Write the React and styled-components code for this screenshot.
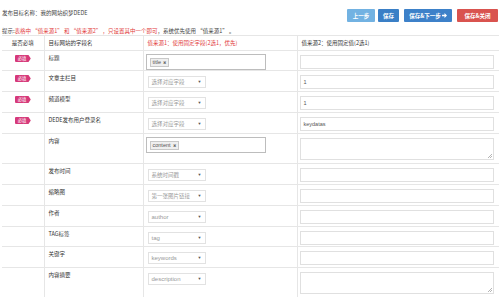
import React from "react";
import styled, { createGlobalStyle } from "styled-components";

const Global = createGlobalStyle`
  html, body { margin: 0; padding: 0; background: #fff; }
  body {
    font-family: "Noto Sans CJK SC", "Liberation Sans", sans-serif;
    font-size: 5.5px;
    color: #333;
    overflow: hidden;
  }
  * { box-sizing: border-box; }
`;

const Page = styled.div`
  width: 499px;
  height: 297px;
  padding: 0 1px 0 2px;
  overflow: hidden;
`;

const TopBar = styled.div`
  display: flex;
  justify-content: space-between;
  align-items: flex-start;
  padding-top: 9px;
  height: 22px;
`;

const Title = styled.div`
  line-height: 8px;
  color: #444;
`;

const Buttons = styled.div`
  display: flex;
  gap: 3px;
`;

const Btn = styled.button`
  height: 13px;
  border: none;
  padding: 0;
  width: ${(p) => p.$w}px;
  margin-left: ${(p) => p.$ml || 0}px;
  background: ${(p) => p.$bg};
  color: #fff;
  font-family: "Noto Sans CJK SC", sans-serif;
  font-size: 5.5px;
  font-weight: 700;
  display: flex;
  align-items: center;
  justify-content: center;
  gap: 1px;
  border-radius: 1px;
`;

const Hint = styled.div`
  margin-top: 6px;
  height: 7px;
  line-height: 7px;
  color: #444;
  white-space: nowrap;
`;

const Red = styled.span`
  color: #e23b3b;
`;

const Table = styled.table`
  width: 497px;
  border-collapse: collapse;
  table-layout: fixed;
`;

const Tr = styled.tr`
  height: ${(p) => p.$h}px;
`;

const Th = styled.td`
  border: 1px solid #e6e6e6;
  border-left: ${(p) => (p.$first ? "none" : "1px solid #e6e6e6")};
  border-right: ${(p) => (p.$last ? "none" : "1px solid #e6e6e6")};
  padding: 0 ${(p) => (p.$center ? 0 : 4)}px;
  text-align: ${(p) => (p.$center ? "center" : "left")};
  vertical-align: middle;
  color: ${(p) => (p.$red ? "#e23b3b" : "#333")};
  line-height: 8px;
  white-space: nowrap;
  overflow: hidden;
`;

const Td = styled.td`
  border: 1px solid #e6e6e6;
  border-left: ${(p) => (p.$first ? "none" : "1px solid #e6e6e6")};
  border-right: ${(p) => (p.$last ? "none" : "1px solid #e6e6e6")};
  padding: ${(p) => p.$pad || "3px 4px 0"};
  vertical-align: top;
  text-align: ${(p) => (p.$center ? "center" : "left")};
  line-height: 8px;
  white-space: nowrap;
  overflow: hidden;
`;

const Badge = styled.span`
  display: inline-block;
  margin-top: 2px;
  width: 16px;
  height: 7px;
  line-height: 7px;
  background: #d6397a;
  color: #fff;
  font-size: 4.3px;
  text-align: left;
  padding-left: 3px;
  border-radius: 1px;
  clip-path: polygon(0 0, 86% 0, 100% 50%, 86% 100%, 0 100%);
`;

const TagBox = styled.div`
  width: 120px;
  height: 16px;
  border: 1px solid #bdbdbd;
  padding: 2px 3px;
  display: flex;
  align-items: center;
  margin-left: -2px;
`;

const Chip = styled.span`
  display: inline-flex;
  align-items: center;
  gap: 2px;
  height: 9px;
  padding: 0 2px;
  border: 1px solid #c8c8c8;
  background: #efefef;
  color: #555;
  font-family: "Liberation Sans", sans-serif;
  font-size: 5.5px;
  line-height: 7px;
`;

const ChipX = styled.span`
  font-size: 4px;
  color: #666;
`;

const Select = styled.div`
  margin-top: 2px;
  width: 58px;
  height: 12px;
  border: 1px solid #e2e2e2;
  display: flex;
  align-items: center;
  justify-content: space-between;
  padding: 0 3px;
  color: #999;
  font-family: "Liberation Sans", "Noto Sans CJK SC", sans-serif;
  font-size: ${(p) => (p.$latin ? 6 : 5.5)}px;
`;

const Caret = styled.span`
  font-size: 4px;
  color: #555;
`;

const Input = styled.div`
  margin-top: ${(p) => p.$mt ?? 0}px;
  width: 194px;
  height: 14px;
  border: 1px solid #e0e0e0;
  padding: 0 3px;
  display: flex;
  align-items: center;
  color: #555;
  font-family: "Liberation Sans", sans-serif;
  font-size: 5.5px;
`;

const AreaWrap = styled.div`
  position: relative;
  margin-top: ${(p) => p.$mt ?? 0}px;
  width: 194px;
  height: 22px;
  &::after {
    content: "";
    position: absolute;
    right: 2px;
    bottom: 2px;
    width: 4px;
    height: 4px;
    background: linear-gradient(135deg, transparent 0 45%, #b5b5b5 45% 58%, transparent 58% 72%, #b5b5b5 72% 85%, transparent 85%);
    pointer-events: none;
  }
`;

const Area = styled.textarea`
  display: block;
  width: 100%;
  height: 100%;
  border: 1px solid #e0e0e0;
  padding: 0;
  resize: none;
  outline: none;
`;

const Arrow = () => (
  <svg width="5" height="5" viewBox="0 0 10 10">
    <path d="M0 3.5h5V0l5 5-5 5V6.5H0z" fill="#fff" />
  </svg>
);

const rows = [
  { req: true, name: "标题", v1: { tag: "title" }, v2: { input: "" }, h: 20 },
  { req: true, name: "文章主栏目", v1: { sel: "选择对应字段" }, v2: { input: "1" }, h: 21 },
  { req: true, name: "频道模型", v1: { sel: "选择对应字段" }, v2: { input: "1" }, h: 21 },
  { req: true, name: "DEDE发布用户登录名", v1: { sel: "选择对应字段" }, v2: { input: "keydatas" }, h: 21 },
  { name: "内容", v1: { tag: "content" }, v2: { area: true }, h: 30 },
  { name: "发布时间", v1: { sel: "系统时间戳" }, v2: { input: "" }, h: 21 },
  { name: "缩略图", v1: { sel: "第一张图片链接" }, v2: { input: "" }, h: 21 },
  { name: "作者", v1: { sel: "author", latin: true }, v2: { input: "" }, h: 21 },
  { name: "TAG标签", v1: { sel: "tag", latin: true }, v2: { input: "" }, h: 20 },
  { name: "关键字", v1: { sel: "keywords", latin: true }, v2: { input: "" }, h: 21 },
  { name: "内容摘要", v1: { sel: "description", latin: true }, v2: { area: true }, h: 30 },
];

export default function App() {
  return (
    <Page>
      <Global />
      <TopBar>
        <Title>发布目标名称：我的网站织梦DEDE</Title>
        <Buttons>
          <Btn $w={28} $bg="#72b2e2">上一步</Btn>
          <Btn $w={21} $bg="#3a7fc6">保存</Btn>
          <Btn $w={48} $ml={2} $bg="#3d81c9">保存&amp;下一步<Arrow /></Btn>
          <Btn $w={41} $ml={2} $bg="#d9534f">保存&amp;关闭</Btn>
        </Buttons>
      </TopBar>
      <Hint>
        提示:<Red>表格中 “值来源1” 和 “值来源2” ，只设置其中一个即可</Red>，系统优先使用 “值来源1” 。
      </Hint>
      <Table>
        <colgroup>
          <col style={{ width: 42 }} />
          <col style={{ width: 99 }} />
          <col style={{ width: 154 }} />
          <col />
        </colgroup>
        <tbody>
          <Tr $h={15}>
            <Th $first $center>是否必填</Th>
            <Th>目标网站的字段名</Th>
            <Th $red>值来源1：使用固定字段(2选1，优先)</Th>
            <Th $last>值来源2：使用固定值(2选1)</Th>
          </Tr>
          {rows.map((r, i) => (
            <Tr key={i} $h={r.h}>
              <Td $first $center $pad="2px 0 0">{r.req && <Badge>必填</Badge>}</Td>
              <Td>{r.name}</Td>
              <Td>
                {r.v1.tag ? (
                  <TagBox>
                    <Chip>
                      {r.v1.tag}
                      <ChipX>✖</ChipX>
                    </Chip>
                  </TagBox>
                ) : (
                  <Select $latin={r.v1.latin}>
                    {r.v1.sel}
                    <Caret>▼</Caret>
                  </Select>
                )}
              </Td>
              <Td $last $pad="3px 2px 0">
                {r.v2.area ? (
                  <AreaWrap $mt={1}>
                    <Area />
                  </AreaWrap>
                ) : (
                  <Input $mt={1}>{r.v2.input}</Input>
                )}
              </Td>
            </Tr>
          ))}
        </tbody>
      </Table>
    </Page>
  );
}
